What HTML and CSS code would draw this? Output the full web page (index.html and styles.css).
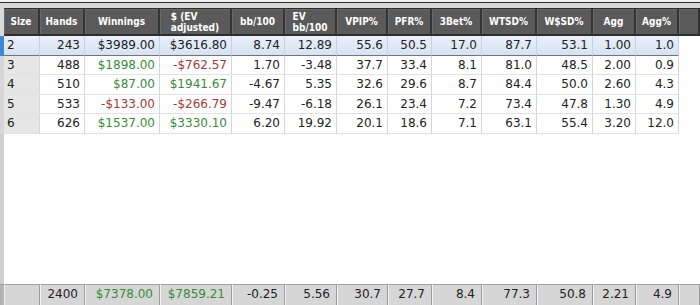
FILE: index.html
```html
<!DOCTYPE html>
<html>
<head>
<meta charset="utf-8">
<link rel="stylesheet" href="styles.css">
</head>
<body>
<div class="grid-view">
  <div class="topband"></div>
  <div class="row head">
    <div class="strip"></div>
    <div class="h"><span>Size</span></div>
    <div class="h"><span>Hands</span></div>
    <div class="h"><span>Winnings</span></div>
    <div class="h"><span class="two">$ (EV<br>adjusted)</span></div>
    <div class="h"><span>bb/100</span></div>
    <div class="h"><span class="two">EV<br>bb/100</span></div>
    <div class="h"><span>VPIP%</span></div>
    <div class="h"><span>PFR%</span></div>
    <div class="h"><span>3Bet%</span></div>
    <div class="h"><span>WTSD%</span></div>
    <div class="h"><span>W$SD%</span></div>
    <div class="h"><span>Agg</span></div>
    <div class="h"><span>Agg%</span></div>
    <div class="h filler"></div>
  </div>

  <div class="row data selected">
    <div class="strip"></div>
    <div class="c size">2</div>
    <div class="c">243</div>
    <div class="c">$3989.00</div>
    <div class="c">$3616.80</div>
    <div class="c">8.74</div>
    <div class="c">12.89</div>
    <div class="c">55.6</div>
    <div class="c">50.5</div>
    <div class="c">17.0</div>
    <div class="c">87.7</div>
    <div class="c">53.1</div>
    <div class="c">1.00</div>
    <div class="c">1.0</div>
    <div class="blank"></div>
  </div>
  <div class="row data">
    <div class="strip"></div>
    <div class="c size">3</div>
    <div class="c">488</div>
    <div class="c pos">$1898.00</div>
    <div class="c neg">-$762.57</div>
    <div class="c">1.70</div>
    <div class="c">-3.48</div>
    <div class="c">37.7</div>
    <div class="c">33.4</div>
    <div class="c">8.1</div>
    <div class="c">81.0</div>
    <div class="c">48.5</div>
    <div class="c">2.00</div>
    <div class="c">0.9</div>
    <div class="blank"></div>
  </div>
  <div class="row data">
    <div class="strip"></div>
    <div class="c size">4</div>
    <div class="c">510</div>
    <div class="c pos">$87.00</div>
    <div class="c pos">$1941.67</div>
    <div class="c">-4.67</div>
    <div class="c">5.35</div>
    <div class="c">32.6</div>
    <div class="c">29.6</div>
    <div class="c">8.7</div>
    <div class="c">84.4</div>
    <div class="c">50.0</div>
    <div class="c">2.60</div>
    <div class="c">4.3</div>
    <div class="blank"></div>
  </div>
  <div class="row data">
    <div class="strip"></div>
    <div class="c size">5</div>
    <div class="c">533</div>
    <div class="c neg">-$133.00</div>
    <div class="c neg">-$266.79</div>
    <div class="c">-9.47</div>
    <div class="c">-6.18</div>
    <div class="c">26.1</div>
    <div class="c">23.4</div>
    <div class="c">7.2</div>
    <div class="c">73.4</div>
    <div class="c">47.8</div>
    <div class="c">1.30</div>
    <div class="c">4.9</div>
    <div class="blank"></div>
  </div>
  <div class="row data">
    <div class="strip"></div>
    <div class="c size">6</div>
    <div class="c">626</div>
    <div class="c pos">$1537.00</div>
    <div class="c pos">$3330.10</div>
    <div class="c">6.20</div>
    <div class="c">19.92</div>
    <div class="c">20.1</div>
    <div class="c">18.6</div>
    <div class="c">7.1</div>
    <div class="c">63.1</div>
    <div class="c">55.4</div>
    <div class="c">3.20</div>
    <div class="c">12.0</div>
    <div class="blank"></div>
  </div>

  <div class="row empty">
    <div class="strip"></div>
    <div class="blank"></div>
  </div>

  <div class="row foot">
    <div class="strip"></div>
    <div class="f"></div>
    <div class="f">2400</div>
    <div class="f pos">$7378.00</div>
    <div class="f pos">$7859.21</div>
    <div class="f">-0.25</div>
    <div class="f">5.56</div>
    <div class="f">30.7</div>
    <div class="f">27.7</div>
    <div class="f">8.4</div>
    <div class="f">77.3</div>
    <div class="f">50.8</div>
    <div class="f">2.21</div>
    <div class="f">4.9</div>
    <div class="f filler"></div>
  </div>
</div>
</body>
</html>
```

FILE: styles.css
```css
* { box-sizing: border-box; }
html, body { margin: 0; padding: 0; background: #ffffff; }

.grid-view {
  --cols: 4px 36px 45px 75px 72px 53px 52px 51px 44px 50px 55px 56px 43px 43px 1fr;
  width: 700px;
  height: 305px;
  display: flex;
  flex-direction: column;
  overflow: hidden;
  font-family: "DejaVu Sans", Verdana, sans-serif;
  font-size: 12px;
  color: #222;
}

.topband {
  height: 8px;
  flex: none;
  background: linear-gradient(#f2f2f2 0, #f2f2f2 2px, #2e2e2e 2px, #2e2e2e 3px, #d9d9d9 3px, #d9d9d9 100%);
}

.row {
  display: grid;
  grid-template-columns: var(--cols);
  flex: none;
}

/* header */
.head { height: 28px; }
.head .strip { background: #d9d9d9; }
.h {
  background: #5a5a5a;
  border-top: 1px solid #2c2c2c;
  border-right: 2px solid #353535;
  border-bottom: 2px solid #2e2e2e;
  box-shadow: inset 1px 1px 0 #6a6a6a;
  color: #ffffff;
  font-family: "DejaVu Sans Condensed", "DejaVu Sans", sans-serif;
  font-weight: bold;
  font-size: 10px;
  display: flex;
  align-items: center;
  justify-content: center;
  line-height: 11px;
}
.h:first-of-type { border-left: 1px solid #2c2c2c; }
.h .two { text-align: left; }

/* data */
.data { height: 19.6px; }
.data .strip { background: #d6d6d6; }
.c {
  border-right: 1px solid #d6d6d6;
  border-bottom: 1px solid #e2e2e2;
  padding: 0 4px 0 3px;
  text-align: right;
  line-height: 18px;
  white-space: nowrap;
  background: #ffffff;
}
.c.size { text-align: left; background: #e6e6e6; }
.blank { background: #ffffff; }

.selected .strip { background: #3d86da; }
.selected .c {
  background: linear-gradient(#eaf0f9, #d6e2f2);
  border-bottom: 1px solid #6f7580;
  border-right-color: #c9d3e0;
}

.pos { color: #3a8a3a; }
.neg { color: #a33a3a; }

/* empty area */
.empty { flex: 1 1 auto; }
.empty .strip { background: #cfcfcf; }

/* footer */
.foot { height: 21px; }
.foot .strip { background: #b4b4b4; border-top: 1px solid #9a9a9a; }
.f {
  background: #d6d6d6;
  border-top: 1px solid #a2a2a2;
  border-left: 1px solid #f2f2f2;
  border-right: 1px solid #9c9c9c;
  text-align: right;
  padding: 0 6px 0 3px;
  line-height: 19px;
  white-space: nowrap;
  color: #222;
}
.f.pos { color: #3a8a3a; }
```
